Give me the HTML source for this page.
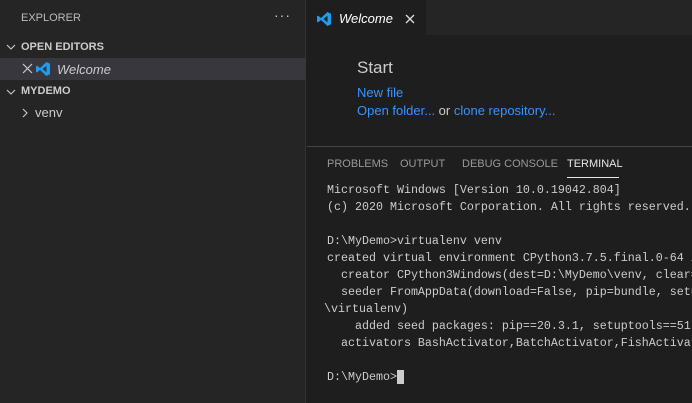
<!DOCTYPE html>
<html><head><style>
*{margin:0;padding:0;box-sizing:border-box}
html,body{width:692px;height:403px;overflow:hidden}
body{background:#1e1e1e;font-family:"Liberation Sans",sans-serif;position:relative;color:#ccc}
.side{position:absolute;left:0;top:0;width:306px;height:403px;background:#252526;border-right:1px solid #333}
.abs{position:absolute;white-space:pre}
.clip{position:absolute;left:307px;top:0;width:385px;height:403px;overflow:hidden}
.term{position:absolute;left:20px;top:182px;font-family:"Liberation Mono",monospace;font-size:11.67px;line-height:17px;color:#cccccc;white-space:pre}
</style></head><body>
<div class="side">
 <div class="abs" style="left:21px;top:12px;font-size:11px;color:#bbb">EXPLORER</div>
 <div class="abs" style="left:274px;top:7px;font-size:14px;color:#ccc;letter-spacing:1px">···</div>
 <svg class="abs" style="left:6px;top:43px" width="10" height="8"><path d="M1 2l4 4 4-4" stroke="#ccc" fill="none" stroke-width="1.1"/></svg>
 <div class="abs" style="left:21px;top:41px;font-size:11px;font-weight:bold;color:#ccc">OPEN EDITORS</div>
 <div style="position:absolute;left:0;top:58px;width:306px;height:22px;background:#37373d"></div>
 <svg class="abs" style="left:22px;top:63px" width="11" height="11"><path d="M1 1l9 9M10 1l-9 9" stroke="#ccc" stroke-width="1.2"/></svg>
 <svg class="abs" style="left:35px;top:61px" width="16" height="16" viewBox="0 0 16 16"><path d="M11.5 1L15 2.7v10.6L11.5 15 5 9l-3 2.4L1 10.8V5.2L2 4.6 5 7l6.5-6zM11.5 4.8L7.5 8l4 3.2z" fill="#1f9cf0"/></svg>
 <div class="abs" style="left:57px;top:62px;font-size:13px;font-style:italic;color:#ccc">Welcome</div>
 <svg class="abs" style="left:6px;top:88px" width="10" height="8"><path d="M1 2l4 4 4-4" stroke="#ccc" fill="none" stroke-width="1.1"/></svg>
 <div class="abs" style="left:21px;top:85px;font-size:11px;font-weight:bold;color:#ccc">MYDEMO</div>
 <svg class="abs" style="left:21px;top:108px" width="8" height="10"><path d="M2 1l4 4-4 4" stroke="#ccc" fill="none" stroke-width="1.1"/></svg>
 <div class="abs" style="left:35px;top:105px;font-size:13px;color:#ccc">venv</div>
</div>
<div class="clip">
<div style="position:absolute;left:0;top:0;width:385px;height:35px;background:#252526"></div>
<div style="position:absolute;left:0;top:0;width:119px;height:35px;background:#1e1e1e"></div>
<svg class="abs" style="left:9px;top:11px" width="16" height="16" viewBox="0 0 16 16"><path d="M11.5 1L15 2.7v10.6L11.5 15 5 9l-3 2.4L1 10.8V5.2L2 4.6 5 7l6.5-6zM11.5 4.8L7.5 8l4 3.2z" fill="#1f9cf0"/></svg>
<div class="abs" style="left:32px;top:11px;font-size:13px;font-style:italic;color:#fff">Welcome</div>
<svg class="abs" style="left:98px;top:14px" width="10" height="10"><path d="M1 1l8 8M9 1l-8 8" stroke="#ddd" stroke-width="1.3"/></svg>
<div class="abs" style="left:50px;top:58px;font-size:17px;color:#ccc">Start</div>
<div class="abs" style="left:50px;top:85px;font-size:13px;color:#3794ff">New file</div>
<div class="abs" style="left:50px;top:103px;font-size:13px;color:#3794ff">Open folder... <span style="color:#ccc">or</span> clone repository...</div>
<div style="position:absolute;left:0;top:146px;width:385px;height:1px;background:#444"></div>
<div class="abs" style="left:20px;top:158px;font-size:11px;color:#999">PROBLEMS</div>
<div class="abs" style="left:93px;top:158px;font-size:11px;color:#999">OUTPUT</div>
<div class="abs" style="left:155px;top:158px;font-size:11px;color:#999">DEBUG CONSOLE</div>
<div class="abs" style="left:260px;top:158px;font-size:11px;color:#e7e7e7">TERMINAL</div>
<div style="position:absolute;left:260px;top:177px;width:52px;height:1px;background:#e7e7e7"></div>
<div class="term">Microsoft Windows [Version 10.0.19042.804]
(c) 2020 Microsoft Corporation. All rights reserved.

D:\MyDemo>virtualenv venv
created virtual environment CPython3.7.5.final.0-64 in
  creator CPython3Windows(dest=D:\MyDemo\venv, clear=False
  seeder FromAppData(download=False, pip=bundle, setuptools
</div>
<div class="term" style="left:17px;top:301px">\virtualenv)</div>
<div class="term" style="top:318px">    added seed packages: pip==20.3.1, setuptools==51
  activators BashActivator,BatchActivator,FishActivator

D:\MyDemo><span style="background:#ccc"> </span></div>
</div>
</body></html>
